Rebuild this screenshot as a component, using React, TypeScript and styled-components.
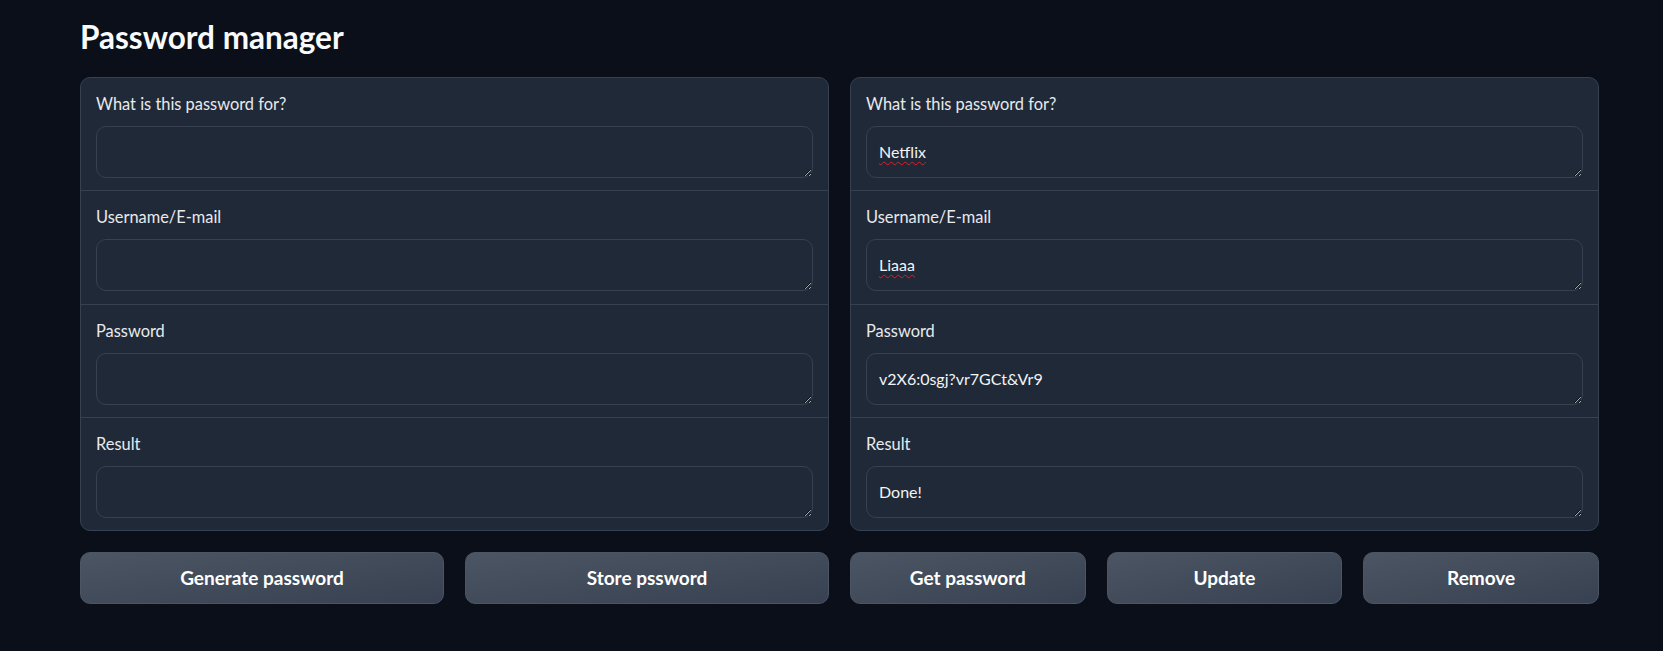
import React from "react";
import styled, { createGlobalStyle } from "styled-components";

const GlobalStyle = createGlobalStyle`
  html, body {
    margin: 0;
    padding: 0;
    background: #0b0f19;
    color-scheme: dark;
    font-family: Lato, "Noto Sans", "Liberation Sans", sans-serif;
  }
  * { box-sizing: border-box; }
`;

const Page = styled.main`
  padding: 18.5px 64px 0 80px;
`;

const Title = styled.h1`
  margin: 0 0 22.5px;
  font-size: 31.5px;
  line-height: 36px;
  font-weight: 700;
  color: #f9fafb;
`;

const Columns = styled.div`
  display: grid;
  grid-template-columns: 1fr 1fr;
  gap: 21px;
`;

const Column = styled.section`
  display: flex;
  flex-direction: column;
  gap: 21px;
  min-width: 0;
`;

const Group = styled.div`
  background: #1f2937;
  border: 1px solid #374151;
  border-radius: 10px;
  overflow: hidden;
`;

const FieldRow = styled.label`
  display: block;
  padding: 13px 15px 12.25px 15px;
  & + & {
    border-top: 1px solid #374151;
  }
`;

const FieldLabel = styled.span`
  display: block;
  font-size: 16.4px;
  line-height: 25px;
  margin-bottom: 10px;
  color: #e8eaee;
`;

const TextBox = styled.div`
  height: 52px;
  padding: 12px 12px;
  border: 1px solid #374151;
  border-radius: 10px;
  background: #1f2937;
  color: #f3f4f6;
  font-size: 16px;
  line-height: 26px;
  white-space: pre;
  overflow: auto;
  resize: vertical;
  outline: none;
`;

const Misspelled = styled.span`
  text-decoration: underline wavy #e0202a;
  text-decoration-thickness: 1.3px;
  text-underline-offset: 3px;
  text-decoration-skip-ink: none;
`;

const ButtonRow = styled.div<{ $count: number }>`
  display: grid;
  grid-template-columns: repeat(${(p) => p.$count}, 1fr);
  gap: 21px;
`;

const Button = styled.button`
  height: 51.5px;
  border: 1px solid #4b5563;
  border-radius: 10px;
  background: linear-gradient(to bottom right, #4b5563, #374151);
  color: #ffffff;
  font-family: inherit;
  font-size: 19px;
  font-weight: 700;
  cursor: pointer;
`;

type Field = { label: string; value?: React.ReactNode };

const Panel = ({ fields }: { fields: Field[] }) => (
  <Group>
    {fields.map((f) => (
      <FieldRow key={f.label}>
        <FieldLabel>{f.label}</FieldLabel>
        <TextBox role="textbox" aria-label={f.label}>
          {f.value}
        </TextBox>
      </FieldRow>
    ))}
  </Group>
);

const labels = ["What is this password for?", "Username/E-mail", "Password", "Result"];

export default function App() {
  const left: Field[] = labels.map((l) => ({ label: l }));
  const right: Field[] = [
    { label: labels[0], value: <Misspelled>Netflix</Misspelled> },
    { label: labels[1], value: <Misspelled>Liaaa</Misspelled> },
    { label: labels[2], value: "v2X6:0sgj?vr7GCt&Vr9" },
    { label: labels[3], value: "Done!" },
  ];
  return (
    <>
      <GlobalStyle />
      <Page>
        <Title>Password manager</Title>
        <Columns>
          <Column>
            <Panel fields={left} />
            <ButtonRow $count={2}>
              <Button>Generate password</Button>
              <Button>Store pssword</Button>
            </ButtonRow>
          </Column>
          <Column>
            <Panel fields={right} />
            <ButtonRow $count={3}>
              <Button>Get password</Button>
              <Button>Update</Button>
              <Button>Remove</Button>
            </ButtonRow>
          </Column>
        </Columns>
      </Page>
    </>
  );
}
